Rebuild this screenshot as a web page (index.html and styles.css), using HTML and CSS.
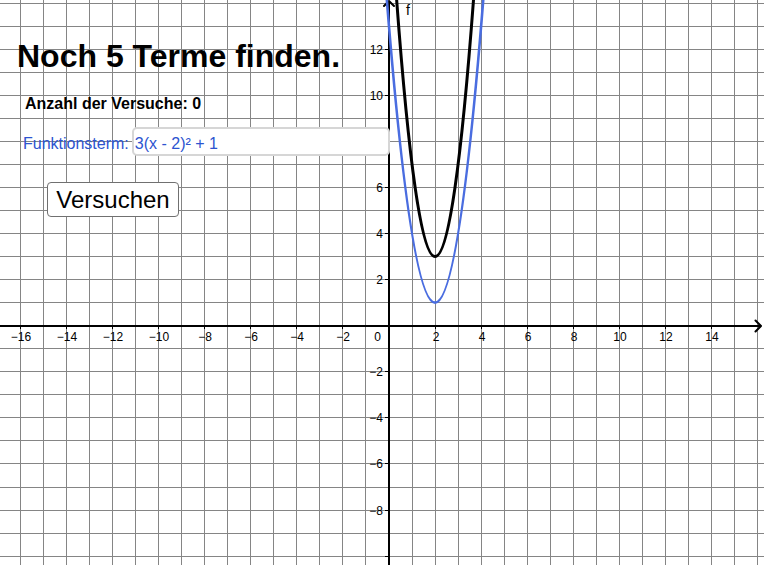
FILE: index.html
```html
<!DOCTYPE html>
<html lang="de">
<head>
<meta charset="utf-8">
<title>Terme finden</title>
<link rel="stylesheet" href="styles.css">
</head>
<body>
<div class="stage">
  <svg class="graph" width="764" height="565" viewBox="0 0 764 565" xmlns="http://www.w3.org/2000/svg">
    <path class="grid" d="M20.5 0V565M43.5 0V565M66.5 0V565M89.5 0V565M112.5 0V565M135.5 0V565M158.5 0V565M181.5 0V565M204.5 0V565M227.5 0V565M250.5 0V565M273.5 0V565M296.5 0V565M319.5 0V565M342.5 0V565M365.5 0V565M412.5 0V565M435.5 0V565M458.5 0V565M481.5 0V565M504.5 0V565M527.5 0V565M550.5 0V565M573.5 0V565M596.5 0V565M619.5 0V565M642.5 0V565M665.5 0V565M688.5 0V565M711.5 0V565M734.5 0V565M757.5 0V565M0 3.5H764M0 26.5H764M0 49.5H764M0 72.5H764M0 95.5H764M0 118.5H764M0 141.5H764M0 164.5H764M0 187.5H764M0 210.5H764M0 233.5H764M0 256.5H764M0 279.5H764M0 302.5H764M0 348.5H764M0 371.5H764M0 394.5H764M0 417.5H764M0 440.5H764M0 463.5H764M0 487.5H764M0 510.5H764M0 533.5H764M0 556.5H764"/>
    <path class="ticks" d="M20.5 326V329M66.5 326V329M112.5 326V329M158.5 326V329M204.5 326V329M250.5 326V329M296.5 326V329M342.5 326V329M435.5 326V329M481.5 326V329M527.5 326V329M573.5 326V329M619.5 326V329M665.5 326V329M711.5 326V329M385 49.5H388M385 95.5H388M385 141.5H388M385 187.5H388M385 233.5H388M385 279.5H388M385 371.5H388M385 417.5H388M385 463.5H388M385 510.5H388M385 556.5H388"/>
    <path class="axis" d="M389 565V1M0 326H761"/>
    <path class="arrow" d="M384 6L389 1L394 6M755.5 320.5L761 326L755.5 331.5"/>
    <g class="xlabels">
      <text x="21" y="341">−16</text>
      <text x="67" y="341">−14</text>
      <text x="113" y="341">−12</text>
      <text x="159" y="341">−10</text>
      <text x="205" y="341">−8</text>
      <text x="251" y="341">−6</text>
      <text x="297" y="341">−4</text>
      <text x="343" y="341">−2</text>
      <text x="436" y="341">2</text>
      <text x="482" y="341">4</text>
      <text x="528" y="341">6</text>
      <text x="574" y="341">8</text>
      <text x="620" y="341">10</text>
      <text x="666" y="341">12</text>
      <text x="712" y="341">14</text>
    </g>
    <g class="ylabels">
      <text x="381" y="341">0</text>
      <text x="383" y="54">12</text>
      <text x="383" y="100">10</text>
      <text x="383" y="146">8</text>
      <text x="383" y="192">6</text>
      <text x="383" y="238">4</text>
      <text x="383" y="284">2</text>
      <text x="383" y="376">−2</text>
      <text x="383" y="422">−4</text>
      <text x="383" y="468">−6</text>
      <text x="383" y="515">−8</text>
    </g>
    <path class="curve-g" d="M385.3 -19.75Q435.06 625.09 484.8 -19.75"/>
    <path class="curve-f" d="M395.2 -19.75Q435.06 532.97 474.95 -19.75"/>
    <text class="fname" x="406" y="15">f</text>
  </svg>

  <div class="panel">
    <h1 class="title">Noch 5 Terme finden.</h1>
    <p class="count">Anzahl der Versuche: 0</p>
    <div class="term-row">
      <span class="term-label">Funktionsterm:</span>
      <div class="term-input">3(x - 2)² + 1</div>
    </div>
    <button class="try-btn" type="button">Versuchen</button>
  </div>
</div>
</body>
</html>
```

FILE: styles.css
```css
html, body {
  margin: 0;
  padding: 0;
  background: #ffffff;
}

body {
  font-family: "Liberation Sans", Arial, sans-serif;
  overflow: hidden;
}

.stage {
  position: relative;
  width: 764px;
  height: 565px;
  overflow: hidden;
  background: #ffffff;
}

.graph {
  position: absolute;
  left: 0;
  top: 0;
  display: block;
}

.grid {
  fill: none;
  stroke: #858585;
  stroke-width: 1;
  shape-rendering: crispEdges;
}

.ticks {
  fill: none;
  stroke: #000000;
  stroke-width: 1;
  shape-rendering: crispEdges;
}

.axis {
  fill: none;
  stroke: #000000;
  stroke-width: 2;
  shape-rendering: crispEdges;
}

.arrow {
  fill: none;
  stroke: #000000;
  stroke-width: 2;
  stroke-linecap: round;
  stroke-linejoin: round;
}

.xlabels text,
.ylabels text {
  font-family: "Liberation Sans", Arial, sans-serif;
  font-size: 12px;
  fill: #000000;
}

.xlabels text {
  text-anchor: middle;
}

.ylabels text {
  text-anchor: end;
}

.curve-f {
  fill: none;
  stroke: #000000;
  stroke-width: 3;
}

.curve-g {
  fill: none;
  stroke: #4a6de0;
  stroke-width: 2.6;
}

.fname {
  font-family: "Liberation Sans", Arial, sans-serif;
  font-size: 14px;
  fill: #000000;
}

.panel {
  position: absolute;
  left: 0;
  top: 0;
  display: flex;
  flex-direction: column;
  align-items: flex-start;
  padding-top: 36px;
}

.title {
  margin: 0 0 0 17px;
  font-size: 32px;
  line-height: 40px;
  font-weight: bold;
  color: #000000;
  white-space: nowrap;
}

.count {
  margin: 18px 0 0 25px;
  font-size: 16px;
  line-height: 20px;
  font-weight: bold;
  color: #000000;
  white-space: nowrap;
}

.term-row {
  margin: 13px 0 0 23px;
  display: flex;
  gap: 3px;
  height: 29px;
}

.term-label,
.term-input {
  box-sizing: border-box;
  height: 29px;
  font-size: 16px;
  line-height: 21px;
  color: #2c54d0;
  white-space: nowrap;
}

.term-label {
  border: 2px solid transparent;
  border-left: 0;
  border-right: 0;
  padding-top: 4px;
}

.term-input {
  width: 258px;
  border: 2px solid #d6d6d6;
  border-radius: 5px;
  background: #ffffff;
  padding: 4px 4px 0 1px;
}

.try-btn {
  margin: 26px 0 0 47px;
  box-sizing: border-box;
  width: 132px;
  height: 35px;
  padding: 0;
  border: 1px solid #707070;
  border-radius: 4px;
  background: #ffffff;
  font-family: "Liberation Sans", Arial, sans-serif;
  font-size: 24px;
  line-height: 33px;
  color: #000000;
  text-align: center;
}
```
